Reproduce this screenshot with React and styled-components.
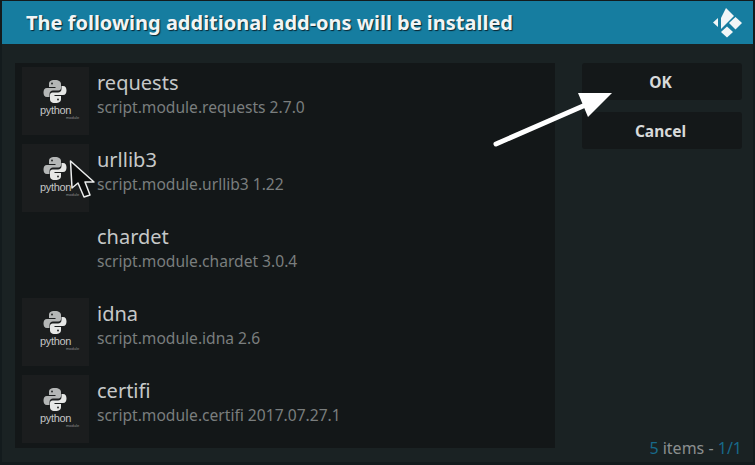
import React from "react"
import styled, { createGlobalStyle } from "styled-components"

const items = [
  { name: "requests", id: "script.module.requests 2.7.0", icon: true },
  { name: "urllib3", id: "script.module.urllib3 1.22", icon: true },
  { name: "chardet", id: "script.module.chardet 3.0.4", icon: false },
  { name: "idna", id: "script.module.idna 2.6", icon: true },
  { name: "certifi", id: "script.module.certifi 2017.07.27.1", icon: true },
]

function PythonLogo() {
  return (
    <LogoWrap>
      <svg width="24" height="25" viewBox="0 0 24 25">
        <path fill="#b4b6b6" d="M12 1C7 1 6 3 6 5v3h6.500v1H4C1.500 9 0.500 11 0.500 13.500S1.500 18 4 18h2.500v-3c0-2 1.500-3.500 3.500-3.500h5.500c1.500 0 2.500-1 2.500-2.500V5c0-2-2-4-6-4z" />
        <path fill="#e6e7e6" d="M12 24c5 0 6-2 6-4v-3h-6.500v-1H20c2.500 0 3.500-2 3.500-4.500S22.500 7 20 7h-1.500v3c0 2-1.500 3.500-3.500 3.500H9.500C8 13.500 7 14.500 7 16v4c0 2 1 4 5 4z" />
        <circle cx="9" cy="4.500" r="1" fill="#2a2c2c" />
        <circle cx="15" cy="20.500" r="1" fill="#2a2c2c" />
      </svg>
      <LogoWord>python</LogoWord>
      <LogoSmall>module</LogoSmall>
    </LogoWrap>
  )
}

export default function App() {
  return (
    <Page>
      <GlobalStyle />
      <Dialog>
        <Header>
          <Title>The following additional add-ons will be installed</Title>
          <svg width="30" height="30" viewBox="0 0 30 30">
            <path fill="#f2f6f7" d="M0 14.500L5 10v9z" />
            <path fill="#f2f6f7" d="M13 0l8 8L8 21V10z" />
            <path fill="#f2f6f7" d="M22.500 9l6.500 6-6.500 6.500L16 15z" />
            <path fill="#f2f6f7" d="M14 18.500l6 5.500-6 5.500L8 24z" />
          </svg>
        </Header>
        <Body>
          <List>
            {items.map((item) => (
              <Row key={item.name}>
                <Thumb $empty={!item.icon}>{item.icon && <PythonLogo />}</Thumb>
                <Info>
                  <Name>{item.name}</Name>
                  <Id>{item.id}</Id>
                </Info>
              </Row>
            ))}
          </List>
          <Side>
            <Button>OK</Button>
            <Button>Cancel</Button>
            <Count>
              <Accent>5</Accent> items - <Accent>1/1</Accent>
            </Count>
          </Side>
        </Body>
      </Dialog>
      <Pointer width="30" height="44" viewBox="0 0 30 44">
        <path fill="#0c0d0d" stroke="#eceded" strokeWidth="1.500" strokeLinejoin="round" d="M1.500 1L3 28l6-5 6 14 6-2-5-13h9z" />
      </Pointer>
      <Arrow width="130" height="70" viewBox="0 0 130 70">
        <path fill="none" stroke="#fff" strokeWidth="5" strokeLinecap="round" d="M6 59L100 18" />
        <path fill="#fff" d="M122 8H88l10 24z" />
      </Arrow>
    </Page>
  )
}

const GlobalStyle = createGlobalStyle`
  html, body {
    margin: 0;
    padding: 0;
    background: #131b1d;
  }
`

const Page = styled.div`
  position: relative;
  width: 755px;
  height: 465px;
  overflow: hidden;
  box-sizing: border-box;
  padding: 1px 2px 3px;
  background: #131b1d;
  font-family: "Noto Sans", "Open Sans", sans-serif;
`

const Dialog = styled.div`
  height: 100%;
  display: flex;
  flex-direction: column;
  background: #1a2223;
`

const Header = styled.header`
  height: 43px;
  flex: none;
  box-sizing: border-box;
  display: flex;
  align-items: center;
  justify-content: space-between;
  padding: 0 10px 0 24px;
  background: #167da0;
`

const Title = styled.h1`
  margin: 0;
  font-size: 20px;
  font-weight: 700;
  color: #f1f5f5;
  text-shadow: 1px 1px 1px #0a2530;
`

const Body = styled.div`
  flex: 1;
  display: flex;
  padding: 19px 11px 0 13px;
  gap: 27px;
`

const List = styled.div`
  width: 540px;
  height: 385px;
  flex: none;
  box-sizing: border-box;
  padding: 4px 0 0 7px;
  background: #131718;
  display: flex;
  flex-direction: column;
  gap: 9px;
`

const Row = styled.div`
  height: 68px;
  display: flex;
  gap: 8px;
`

const Thumb = styled.div`
  width: 67px;
  height: 68px;
  flex: none;
  display: flex;
  justify-content: center;
  background: ${(p) => (p.$empty ? "transparent" : "#1b1d1e")};
`

const LogoWrap = styled.div`
  display: flex;
  flex-direction: column;
  align-items: center;
  padding-top: 12px;
`

const LogoWord = styled.span`
  font-family: "Liberation Sans", sans-serif;
  font-size: 11px;
  line-height: 10px;
  letter-spacing: -0.3px;
  color: #c4c5c5;
  margin-top: 1px;
`

const LogoSmall = styled.span`
  align-self: flex-end;
  font-family: "Liberation Sans", sans-serif;
  font-size: 4px;
  line-height: 6px;
  color: #8a8c8c;
  margin-right: -8px;
`

const Info = styled.div`
  display: flex;
  flex-direction: column;
  padding-top: 3px;
`

const Name = styled.div`
  font-size: 20px;
  line-height: 26px;
  color: #c6c8c8;
`

const Id = styled.div`
  font-size: 15.600px;
  line-height: 22px;
  color: #7a7e7e;
`

const Side = styled.div`
  flex: 1;
  display: flex;
  flex-direction: column;
  gap: 12px;
`

const Button = styled.div`
  height: 37px;
  box-sizing: border-box;
  padding-right: 3px;
  display: flex;
  align-items: center;
  justify-content: center;
  border-radius: 3px;
  background: #141819;
  color: #d8dada;
  font-size: 15.500px;
  font-weight: 700;
`

const Count = styled.div`
  margin-top: auto;
  align-self: flex-end;
  font-size: 16px;
  line-height: 20px;
  color: #8b8f8f;
  margin-bottom: 4px;
`

const Accent = styled.span`
  color: #17698a;
`

const Pointer = styled.svg`
  position: absolute;
  left: 69px;
  top: 160px;
`

const Arrow = styled.svg`
  position: absolute;
  left: 490px;
  top: 85px;
`
